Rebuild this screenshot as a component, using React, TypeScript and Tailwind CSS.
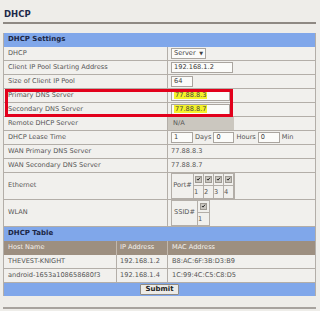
import { FunctionComponent, ReactNode } from "react";

const Row: FunctionComponent<{ label: string; tall?: boolean; children?: ReactNode }> = ({
  label,
  tall,
  children,
}) => (
  <div
    className={`grid grid-cols-[164px_1fr] border-b border-[#b3aea8] ${tall ? "h-[27px]" : "h-[14px]"}`}
  >
    <div className="flex items-center pl-[4px] border-r border-[#b3aea8] text-[#555]">{label}</div>
    <div className="flex items-center pl-[3px] gap-[2px] text-[#555]">{children}</div>
  </div>
);

const Input: FunctionComponent<{ w: string; children?: ReactNode }> = ({ w, children }) => (
  <div className={`h-[11px] ${w} border border-[#aaa59f] bg-[#fbfbf9] flex items-center pl-[2px] text-[#404040]`}>
    {children}
  </div>
);

const Check = () => (
  <div className="w-[7px] h-[7px] bg-[#c9c6c0] border border-[#9d9992] flex items-center justify-center">
    <svg viewBox="0 0 8 8" className="w-[6px] h-[6px]">
      <path d="M1.5 4 L3.2 5.8 L6.5 1.8" stroke="#222" strokeWidth="1.5" fill="none" />
    </svg>
  </div>
);

export default function App() {
  return (
    <div
      className="w-[320px] h-[311px] bg-[#eeede9] relative overflow-hidden text-[6.6px] leading-none"
      style={{ fontFamily: '"DejaVu Sans", Verdana, sans-serif' }}
    >
      <div className="pt-[10px] pl-[4px] text-[8.5px] font-bold text-[#1d2849]">DHCP</div>
      <div className="mt-[3px] mx-[3px] w-[313px] h-[2px] bg-[#8e8983]" />

      <div className="mt-[9px] ml-[3px] w-[313px] border-x border-[#b3aea8] bg-[#f1f0ed]">
        <div className="h-[14px] bg-[#80a7ea] flex items-center pl-[4px] font-bold text-[7px] text-[#1b2645]">
          DHCP Settings
        </div>
        <Row label="DHCP">
          <div className="h-[11px] w-[35px] border border-[#aaa59f] bg-[#fbfbf9] flex items-center justify-between px-[2px] text-[#404040]">
            <span>Server</span>
            <span className="text-[5px]">▼</span>
          </div>
        </Row>
        <Row label="Client IP Pool Starting Address">
          <Input w="w-[62px]">192.168.1.2</Input>
        </Row>
        <Row label="Size of Client IP Pool">
          <Input w="w-[22px]">64</Input>
        </Row>
        <Row label="Primary DNS Server">
          <Input w="w-[59px]">
            <span className="bg-[#f4f22a] px-[1px] py-[1px]">77.88.8.3</span>
          </Input>
        </Row>
        <Row label="Secondary DNS Server">
          <Input w="w-[59px]">
            <span className="bg-[#f4f22a] px-[1px] py-[1px]">77.88.8.7</span>
          </Input>
        </Row>
        <Row label="Remote DHCP Server">
          <div className="-ml-[3px] h-full w-[66px] bg-[#cbc7bf] flex items-center pl-[5px]">N/A</div>
        </Row>
        <Row label="DHCP Lease Time">
          <Input w="w-[22px]">1</Input>
          <span>Days</span>
          <Input w="w-[21px]">0</Input>
          <span>Hours</span>
          <Input w="w-[22px]">0</Input>
          <span>Min</span>
        </Row>
        <Row label="WAN Primary DNS Server">77.88.8.3</Row>
        <Row label="WAN Secondary DNS Server">77.88.8.7</Row>
        <Row label="Ethernet" tall>
          <div className="h-[26px] grid grid-cols-[22px_10px_10px_10px_10px] grid-rows-2 border border-[#b3aea8]">
            <div className="row-span-2 flex items-center justify-center border-r border-[#b3aea8]">Port#</div>
            {[1, 2, 3, 4].map((n) => (
              <div key={"c" + n} className="flex items-center justify-center border-r border-b border-[#b3aea8] last:border-r-0">
                <Check />
              </div>
            ))}
            {[1, 2, 3, 4].map((n) => (
              <div key={"n" + n} className="flex items-end pb-[2px] border-r border-[#b3aea8]">
                {n}
              </div>
            ))}
          </div>
        </Row>
        <Row label="WLAN" tall>
          <div className="h-[26px] grid grid-cols-[26px_11px] grid-rows-2 border border-[#b3aea8]">
            <div className="row-span-2 flex items-center justify-center border-r border-[#b3aea8]">SSID#</div>
            <div className="flex items-center justify-center border-b border-[#b3aea8]">
              <Check />
            </div>
            <div className="flex items-end pb-[2px]">1</div>
          </div>
        </Row>

        <div className="h-[14px] bg-[#80a7ea] flex items-center pl-[4px] font-bold text-[7px] text-[#1b2645]">
          DHCP Table
        </div>
        <div className="h-[14px] grid grid-cols-[113px_51px_1fr] bg-[#9d8f80] text-[#f4f1ec]">
          <div className="flex items-center pl-[4px] border-r border-[#c2b8ad]">Host Name</div>
          <div className="flex items-center pl-[3px] border-r border-[#c2b8ad]">IP Address</div>
          <div className="flex items-center pl-[4px]">MAC Address</div>
        </div>
        {[
          ["THEVEST-KNIGHT", "192.168.1.2", "B8:AC:6F:3B:D3:B9"],
          ["android-1653a108658680f3", "192.168.1.4", "1C:99:4C:C5:C8:D5"],
        ].map((r) => (
          <div key={r[0]} className="h-[14px] grid grid-cols-[113px_51px_1fr] border-b border-[#b3aea8] text-[#555]">
            <div className="flex items-center pl-[4px] border-r border-[#b3aea8]">{r[0]}</div>
            <div className="flex items-center pl-[3px] border-r border-[#b3aea8]">{r[1]}</div>
            <div className="flex items-center pl-[4px]">{r[2]}</div>
          </div>
        ))}
        <div className="h-[13px] bg-[#80a7ea] flex items-center justify-center">
          <button className="h-[11px] px-[4px] bg-[#ecebe7] border border-[#8f8b85] rounded-[1px] font-bold text-[7px] text-[#222] leading-none">
            Submit
          </button>
        </div>
      </div>

      <div className="mt-[11px] mx-[3px] w-[313px] h-[2px] bg-[#a7a39e]" />

      <div className="absolute left-[5px] top-[89px] w-[228px] h-[28px] border-[3px] border-[#e2001b]" />
    </div>
  );
}
